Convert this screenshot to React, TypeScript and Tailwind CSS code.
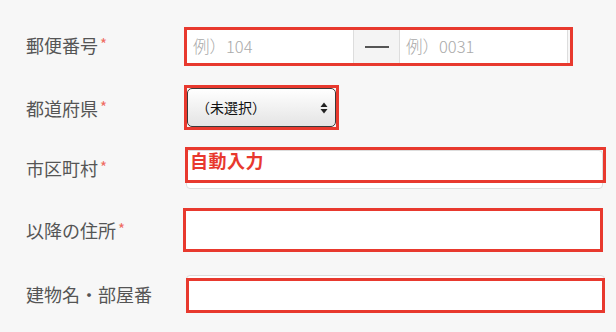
const red = "border-[3px] border-[#e8392e]";

function Label({ text, required }: { text: string; required?: boolean }) {
  return (
    <div className="w-[184px] shrink-0 pl-[26px] flex items-start text-[18px] leading-none text-[#555]">
      <span>{text}</span>
      {required && <span className="text-[15px] leading-none text-[#ef6b62] ml-[2px]">*</span>}
    </div>
  );
}

export default function App() {
  return (
    <div
      className="w-[616px] h-[332px] bg-[#f7f7f7] pt-[27px] overflow-hidden"
      style={{ fontFamily: '"Noto Sans CJK JP", "Noto Sans", sans-serif' }}
    >
      {/* 郵便番号 */}
      <div className="flex items-center h-[39px]">
        <div className="-mt-[4px]">
          <Label text="郵便番号" required />
        </div>
        <div className={`w-[389px] h-[39px] ${red} flex`}>
          <div className="w-[166px] bg-white flex items-center pl-[6px] text-[16.5px] font-light text-[#aaa]">例）104</div>
          <div className="w-[47px] bg-[#f4f4f4] border-x border-[#ddd] flex items-center justify-center">
            <div className="w-[24px] h-[2px] bg-[#555]" />
          </div>
          <div className="w-[168px] bg-white border-r border-[#ddd] flex items-center pl-[6px] text-[16.5px] font-light text-[#aaa]">例）0031</div>
        </div>
      </div>

      {/* 都道府県 */}
      <div className="flex items-center h-[45px] mt-[19px]">
        <Label text="都道府県" required />
        <div className={`w-[155px] h-[45px] ${red}`}>
          <div className="h-full rounded-[5px] border border-[#3a3a3a] bg-gradient-to-b from-white to-[#e4e4e4] shadow-[inset_0_1px_0_#fff] flex items-center justify-between pl-[8px] pr-[7px] text-[14px] text-[#111]">
            <span>（未選択）</span>
            <svg width="8" height="12" viewBox="0 0 8 12">
              <path d="M4 0.5 L7.5 5 L0.5 5 Z" fill="#222" />
              <path d="M4 11.5 L7.5 7 L0.5 7 Z" fill="#222" />
            </svg>
          </div>
        </div>
      </div>

      {/* 市区町村 */}
      <div className="flex items-center h-[42px] mt-[17px]">
        <Label text="市区町村" required />
        <div className="relative w-[421px] h-[42px] ml-[1px]">
          <div className="ml-[1px] mt-[3px] w-[417px] h-[39px] bg-white border border-[#ddd] rounded-[4px]" />
          <div className={`absolute top-0 left-0 w-[421px] h-[36px] ${red}`}>
            <span className="block pl-[2px] text-[18px] leading-[20px] font-semibold tracking-[0.5px] text-[#e8392e]">自動入力</span>
          </div>
        </div>
      </div>

      {/* 以降の住所 */}
      <div className="flex items-center h-[44px] mt-[19px]">
        <Label text="以降の住所" required />
        <div className={`-ml-[1px] w-[420px] h-[44px] ${red} bg-white`} />
      </div>

      {/* 建物名・部屋番 */}
      <div className="flex items-center h-[38px] mt-[23px]">
        <Label text="建物名・部屋番" />
        <div className="relative w-[419px] h-[38px] ml-[2px]">
          <div className="w-full h-full bg-white border border-[#ddd] rounded-[4px]" />
          <div className={`absolute top-[3px] left-0 w-full h-[35px] ${red}`} />
        </div>
      </div>
    </div>
  );
}
